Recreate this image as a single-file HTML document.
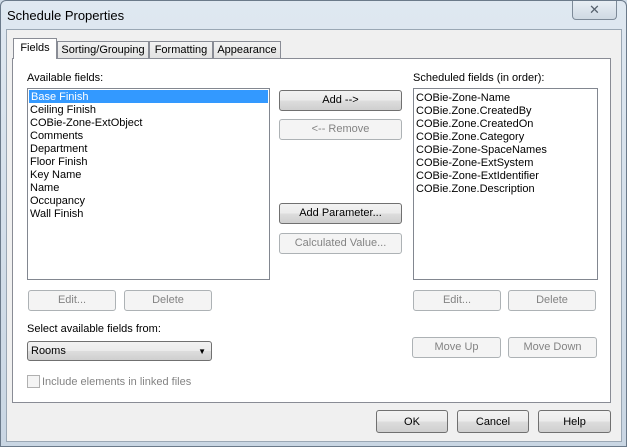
<!DOCTYPE html>
<html><head><style>
*{margin:0;padding:0;box-sizing:border-box}
body{width:627px;height:447px;overflow:hidden;background:#cfdbe7;font-family:"Liberation Sans",sans-serif;font-size:11px;color:#000;position:relative}
.a{position:absolute}
.frame{left:0;top:0;width:627px;height:447px;background:linear-gradient(#dfe8f1,#c9d6e3);border:1px solid #6b7a8a;border-radius:6px 6px 0 0}
.client{left:6px;top:29px;width:616px;height:413px;background:#f0f0f0;border:1px solid #9aa7b4}
.btn{position:absolute;border:1px solid #707070;border-radius:3px;background:linear-gradient(#f2f2f2 0%,#ebebeb 50%,#dddddd 51%,#cfcfcf 100%);text-align:center;line-height:19px;color:#000}
.dis{border-color:#adb2b5;background:#f4f4f4;color:#838383}
.list{position:absolute;background:#fff;border:1px solid #828790}
.list div{height:13px;line-height:14px;padding-left:2px;white-space:nowrap}
.tab{position:absolute;border:1px solid #898c95;border-bottom:none;background:linear-gradient(#f2f2f2,#e3e3e3);text-align:center;line-height:16px}
</style></head><body>
<div class="a frame"></div>
<div class="a" style="left:7px;top:8px;font-size:13px;color:#000">Schedule Properties</div>
<div class="a" style="left:572px;top:1px;width:45px;height:19px;border:1px solid #7d8a98;border-top:none;border-radius:0 0 4px 4px;background:linear-gradient(#e8eef4,#cfd9e3);text-align:center;line-height:17px;color:#55606c;font-size:13px">✕</div>
<div class="a client"></div>
<div class="a" style="left:12px;top:58px;width:599px;height:345px;background:#fff;border:1px solid #898c95"></div>
<div class="tab" style="left:57px;top:41px;width:92px;height:17px">Sorting/Grouping</div>
<div class="tab" style="left:149px;top:41px;width:64px;height:17px">Formatting</div>
<div class="tab" style="left:213px;top:41px;width:68px;height:17px">Appearance</div>
<div class="tab" style="left:13px;top:38px;width:44px;height:21px;background:#fff;line-height:19px;z-index:2">Fields</div>
<div class="a" style="left:27px;top:72px">Available fields:</div>
<div class="list" style="left:27px;top:88px;width:243px;height:192px;padding-top:1px">
<div style="background:#3399ff;color:#fff;margin:0 1px">Base Finish</div>
<div>Ceiling Finish</div><div>COBie-Zone-ExtObject</div><div>Comments</div><div>Department</div><div>Floor Finish</div><div>Key Name</div><div>Name</div><div>Occupancy</div><div>Wall Finish</div>
</div>
<div class="a" style="left:413px;top:72px">Scheduled fields (in order):</div>
<div class="list" style="left:413px;top:88px;width:185px;height:192px;padding-top:2px">
<div>COBie-Zone-Name</div><div>COBie.Zone.CreatedBy</div><div>COBie.Zone.CreatedOn</div><div>COBie.Zone.Category</div><div>COBie-Zone-SpaceNames</div><div>COBie-Zone-ExtSystem</div><div>COBie-Zone-ExtIdentifier</div><div>COBie.Zone.Description</div>
</div>
<div class="btn" style="left:279px;top:90px;width:123px;height:21px">Add --&gt;</div>
<div class="btn dis" style="left:279px;top:119px;width:123px;height:21px">&lt;-- Remove</div>
<div class="btn" style="left:279px;top:203px;width:123px;height:21px">Add Parameter...</div>
<div class="btn dis" style="left:279px;top:233px;width:123px;height:21px">Calculated Value...</div>
<div class="btn dis" style="left:28px;top:290px;width:88px;height:21px">Edit...</div>
<div class="btn dis" style="left:124px;top:290px;width:88px;height:21px">Delete</div>
<div class="btn dis" style="left:413px;top:290px;width:88px;height:21px">Edit...</div>
<div class="btn dis" style="left:508px;top:290px;width:88px;height:21px">Delete</div>
<div class="a" style="left:27px;top:323px">Select available fields from:</div>
<div class="btn" style="left:27px;top:341px;width:185px;height:20px;text-align:left;padding-left:3px;line-height:19px">Rooms<span style="position:absolute;right:5px;top:0;font-size:8px">▼</span></div>
<div class="a" style="left:27px;top:375px;width:13px;height:13px;border:1px solid #b0b0b0;background:#f4f4f4"></div>
<div class="a" style="left:42px;top:376px;color:#838383">Include elements in linked files</div>
<div class="btn dis" style="left:412px;top:337px;width:89px;height:21px">Move Up</div>
<div class="btn dis" style="left:508px;top:337px;width:89px;height:21px">Move Down</div>
<div class="btn" style="left:376px;top:410px;width:72px;height:23px;line-height:22px">OK</div>
<div class="btn" style="left:457px;top:410px;width:72px;height:23px;line-height:22px">Cancel</div>
<div class="btn" style="left:538px;top:410px;width:73px;height:23px;line-height:22px">Help</div>
</body></html>
